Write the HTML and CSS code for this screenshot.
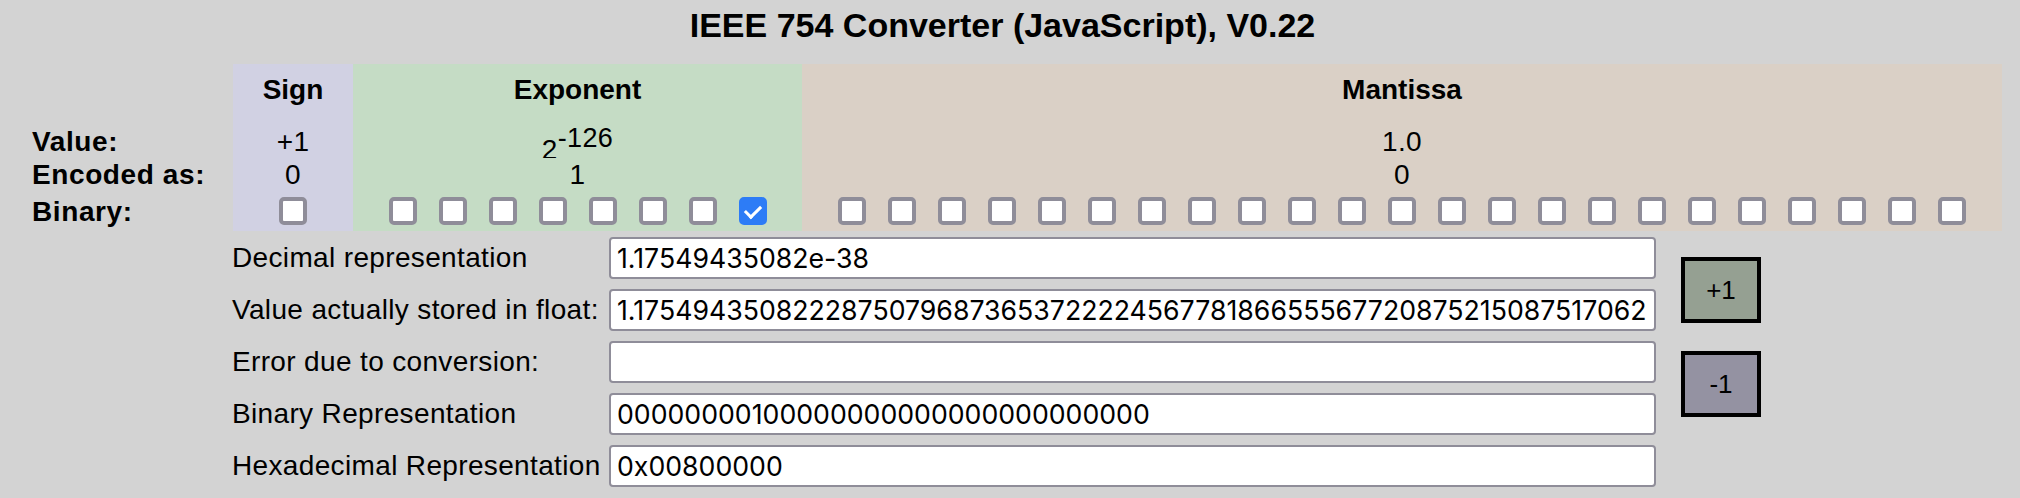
FILE: index.html
```html
<!DOCTYPE html>
<html lang="en">
<head>
<meta charset="utf-8">
<title>IEEE 754 Converter</title>
<link rel="stylesheet" href="styles.css">
</head>
<body>
<h1 class="title">IEEE 754 Converter (JavaScript), V0.22</h1>

<div class="bits">
  <div class="cell label"></div>
  <div class="cell head sign">Sign</div>
  <div class="cell head exponent">Exponent</div>
  <div class="cell head mantissa">Mantissa</div>

  <div class="cell label">Value:</div>
  <div class="cell sign">+1</div>
  <div class="cell exponent"><span class="power">2<sup class="pow">-126</sup></span></div>
  <div class="cell mantissa">1.0</div>

  <div class="cell label">Encoded as:</div>
  <div class="cell sign">0</div>
  <div class="cell exponent">1</div>
  <div class="cell mantissa">0</div>

  <div class="cell label">Binary:</div>
  <div class="cell boxes sign"><input type="checkbox" class="bit"></div>
  <div class="cell boxes exponent">
    <input type="checkbox" class="bit"><input type="checkbox" class="bit"><input type="checkbox" class="bit"><input type="checkbox" class="bit"><input type="checkbox" class="bit"><input type="checkbox" class="bit"><input type="checkbox" class="bit"><input type="checkbox" class="bit" checked>
  </div>
  <div class="cell boxes mantissa">
    <input type="checkbox" class="bit"><input type="checkbox" class="bit"><input type="checkbox" class="bit"><input type="checkbox" class="bit"><input type="checkbox" class="bit"><input type="checkbox" class="bit"><input type="checkbox" class="bit"><input type="checkbox" class="bit"><input type="checkbox" class="bit"><input type="checkbox" class="bit"><input type="checkbox" class="bit"><input type="checkbox" class="bit"><input type="checkbox" class="bit"><input type="checkbox" class="bit"><input type="checkbox" class="bit"><input type="checkbox" class="bit"><input type="checkbox" class="bit"><input type="checkbox" class="bit"><input type="checkbox" class="bit"><input type="checkbox" class="bit"><input type="checkbox" class="bit"><input type="checkbox" class="bit"><input type="checkbox" class="bit">
  </div>
</div>

<div class="io">
  <label class="io-label">Decimal representation</label>
  <input class="field" type="text" value="1.17549435082e-38">
  <div class="steps">
    <button class="step plus" type="button">+1</button>
    <button class="step minus" type="button">-1</button>
  </div>

  <label class="io-label">Value actually stored in float:</label>
  <input class="field" type="text" value="1.1754943508222875079687365372222456778186655567720875215087517062">

  <label class="io-label">Error due to conversion:</label>
  <input class="field" type="text" value="">

  <label class="io-label">Binary Representation</label>
  <input class="field" type="text" value="00000000100000000000000000000000">

  <label class="io-label">Hexadecimal Representation</label>
  <input class="field" type="text" value="0x00800000">
</div>
</body>
</html>
```

FILE: styles.css
```css
* { box-sizing: border-box; }

html, body {
  margin: 0;
  padding: 0;
  background: #d3d3d3;
  color: #000;
  font-family: "Liberation Sans", Arial, Helvetica, sans-serif;
  font-size: 28px;
  letter-spacing: 0.35px;
}

.title {
  margin: 0;
  padding: 5px 15px 0 0;
  font-size: 34px;
  line-height: 40px;
  font-weight: bold;
  letter-spacing: 0;
  text-align: center;
}

/* ---------- bit table ---------- */
.bits {
  display: grid;
  grid-template-columns: 201px 120px 449px 1200px;
  grid-template-rows: 61px 33px 33px 40px;
  margin-top: 19px;
  padding-left: 32px;
}

.cell {
  display: flex;
  align-items: center;
  justify-content: center;
  line-height: 33px;
  white-space: nowrap;
}

.cell.label {
  justify-content: flex-start;
  font-weight: bold;
  letter-spacing: 0.6px;
}

.cell.head {
  align-items: flex-start;
  padding-top: 10px;
  line-height: 32px;
  font-weight: bold;
  letter-spacing: 0;
}

.sign { background: #d1d1e3; }
.exponent { background: #c5dcc5; }
.mantissa { background: #dad0c6; }

.power {
  display: inline-block;
  line-height: 33px;
  padding-top: 8px;
}

.pow {
  font-size: 27px;
  line-height: 1;
  vertical-align: 12px;
}

.cell.boxes {
  align-items: flex-start;
  padding-top: 6px;
}

.bit {
  -webkit-appearance: none;
  appearance: none;
  display: inline-grid;
  place-content: center;
  width: 28px;
  height: 28px;
  margin: 0 11px;
  border: 4px solid #8f8d99;
  border-radius: 5px;
  background: #fff;
}

.bit:checked {
  background: #2d7cf6;
  border-color: #2d7cf6;
}

.bit:checked::before {
  content: "";
  width: 7px;
  height: 13px;
  margin-top: -3px;
  border-right: 3px solid #fff;
  border-bottom: 3px solid #fff;
  transform: rotate(45deg);
}

/* ---------- text fields ---------- */
.io {
  display: grid;
  grid-template-columns: 368px 1047px 80px;
  grid-template-rows: repeat(5, 42px);
  column-gap: 9px;
  row-gap: 10px;
  margin-top: 6px;
  padding-left: 232px;
}

.io-label {
  display: flex;
  align-items: center;
  white-space: nowrap;
}

.field {
  width: 100%;
  height: 42px;
  margin: 0;
  padding: 0 6px;
  border: 2px solid #8f8d99;
  border-radius: 4px;
  background: #fff;
  font-family: Inter, "Liberation Sans", Arial, sans-serif;
  font-size: 26.7px;
  letter-spacing: 0;
  color: #000;
  outline: none;
}

.steps {
  grid-column: 3;
  grid-row: 1 / 6;
  display: flex;
  flex-direction: column;
  gap: 28px;
  padding-top: 20px;
  margin-left: 16px;
}

.step {
  width: 80px;
  height: 66px;
  margin: 0;
  padding: 0;
  border: 4px solid #000;
  border-radius: 0;
  font-family: "Liberation Sans", Arial, Helvetica, sans-serif;
  font-size: 26px;
  color: #000;
}

.step.plus { background: #95a092; }
.step.minus { background: #9492a2; }
```
